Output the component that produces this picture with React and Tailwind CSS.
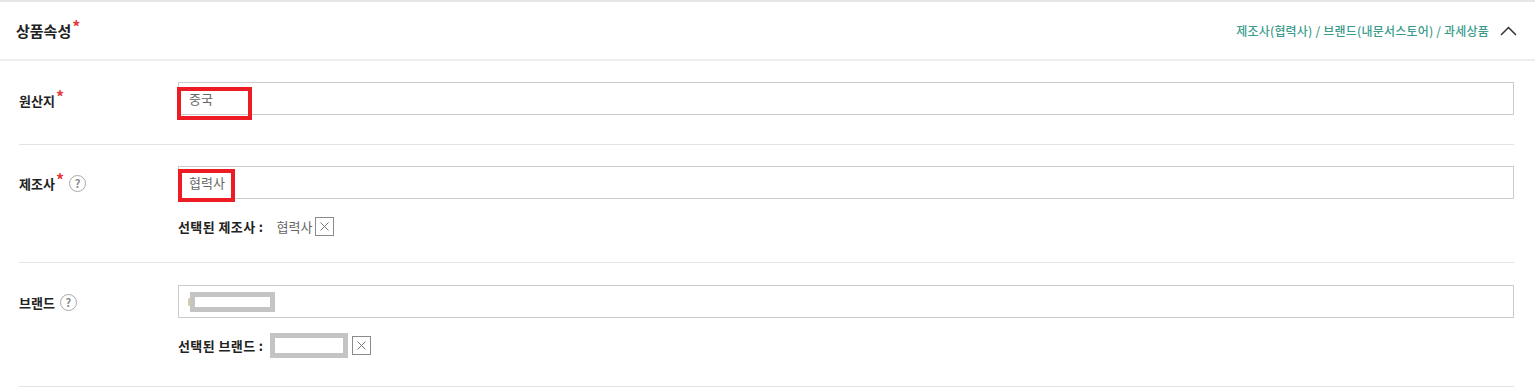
import React from 'react';

const font = { fontFamily: '"Noto Sans CJK KR", "Noto Sans", sans-serif' };

function Star() {
  return <span className="text-[#e5393d] text-[16px] leading-none relative -top-[5px] ml-px">*</span>;
}

function Help() {
  return (
    <span className="ml-[5px] inline-flex h-[17px] w-[17px] items-center justify-center rounded-full border border-[#a8a8a8] text-[11px] leading-none text-[#888]">
      ?
    </span>
  );
}

function Redact({ className }) {
  return <span className={`block border-[5px] border-[#c4c4c4] bg-white ${className}`} />;
}

function CloseBox({ className = '' }) {
  return (
    <span className={`inline-flex h-[19px] w-[19px] items-center justify-center border border-[#8a8a8a] bg-white ${className}`}>
      <svg width="9" height="9" viewBox="0 0 9 9" fill="none" stroke="#777" strokeWidth="1">
        <path d="M0.5 0.5 8.5 8.5M8.5 0.5 0.5 8.5" />
      </svg>
    </span>
  );
}

function Row({ label, required, help, labelTop, pt = 'pt-[21px]', pb, children }) {
  return (
    <div className={`flex items-start ${pt} ${pb} border-b border-[#e3e3e3]`}>
      <div className={`w-[159px] shrink-0 flex items-center h-[17px] text-[13px] font-bold text-[#222] leading-none ${labelTop}`}>
        <span>{label}</span>
        {required && <Star />}
        {help && <Help />}
      </div>
      <div className="flex-1">{children}</div>
    </div>
  );
}

export default function App() {
  return (
    <div className="bg-white w-[1535px] h-[391px] overflow-hidden" style={font}>
      <div className="border-t-2 border-[#e6e6e6]" />
      <div className="flex items-center justify-between h-[59px] pl-[16px] pr-[18px] border-b-2 border-[#eeeeee]">
        <div className="flex items-center text-[15px] font-bold text-[#222] leading-none">
          상품속성<Star />
        </div>
        <div className="flex items-center">
          <span className="text-[12px] font-medium text-[#3c9c8c] leading-none tracking-[0.2px]">
            제조사(협력사) / 브랜드(내문서스토어) / 과세상품
          </span>
          <svg className="ml-[11px]" width="17" height="10" viewBox="0 0 17 10" fill="none" stroke="#333" strokeWidth="1.5">
            <path d="M1 9 8.5 1.5 16 9" />
          </svg>
        </div>
      </div>

      <div className="pl-[19px] pr-[21px]">
        <Row label="원산지" required labelTop="mt-[10px]" pb="pb-[29px]">
          <div className="relative h-[33px] border border-[#cccccc] flex items-center pl-[10px] text-[13px] text-[#666]">
            중국
            <span className="absolute -left-[2px] top-[4px] h-[33px] w-[75px] border-[4px] border-[#ed1c24]" />
          </div>
        </Row>
        <Row label="제조사" required help labelTop="mt-[9px]" pb="pb-[23px]">
          <div className="relative h-[33px] border border-[#cccccc] flex items-center pl-[10px] text-[13px] text-[#666]">
            협력사
            <span className="absolute -left-[1px] top-[2px] h-[33px] w-[57px] border-[4px] border-[#ed1c24]" />
          </div>
          <div className="mt-[14px] h-[26px] flex items-center text-[13px] leading-none">
            <span className="font-bold text-[#222] tracking-[0.4px]">선택된 제조사 :</span>
            <span className="ml-[13px] text-[#666]">협력사</span>
            <CloseBox className="ml-[3px]" />
          </div>
        </Row>
        <Row label="브랜드" help labelTop="mt-[9px]" pt="pt-[22px]" pb="pb-[28px]">
          <div className="h-[33px] border border-[#cccccc] flex items-center pl-[9px]">
            <span className="h-[8px] w-[3px] bg-[#d8c9a0] rounded-sm" />
            <Redact className="-ml-[1px] h-[20px] w-[85px]" />
          </div>
          <div className="mt-[14px] h-[26px] flex items-center text-[13px] leading-none">
            <span className="font-bold text-[#222] tracking-[0.4px]">선택된 브랜드 :</span>
            <Redact className="ml-[6px] h-[25px] w-[78px] border-[4px]" />
            <CloseBox className="ml-[4px]" />
          </div>
        </Row>
      </div>
    </div>
  );
}
